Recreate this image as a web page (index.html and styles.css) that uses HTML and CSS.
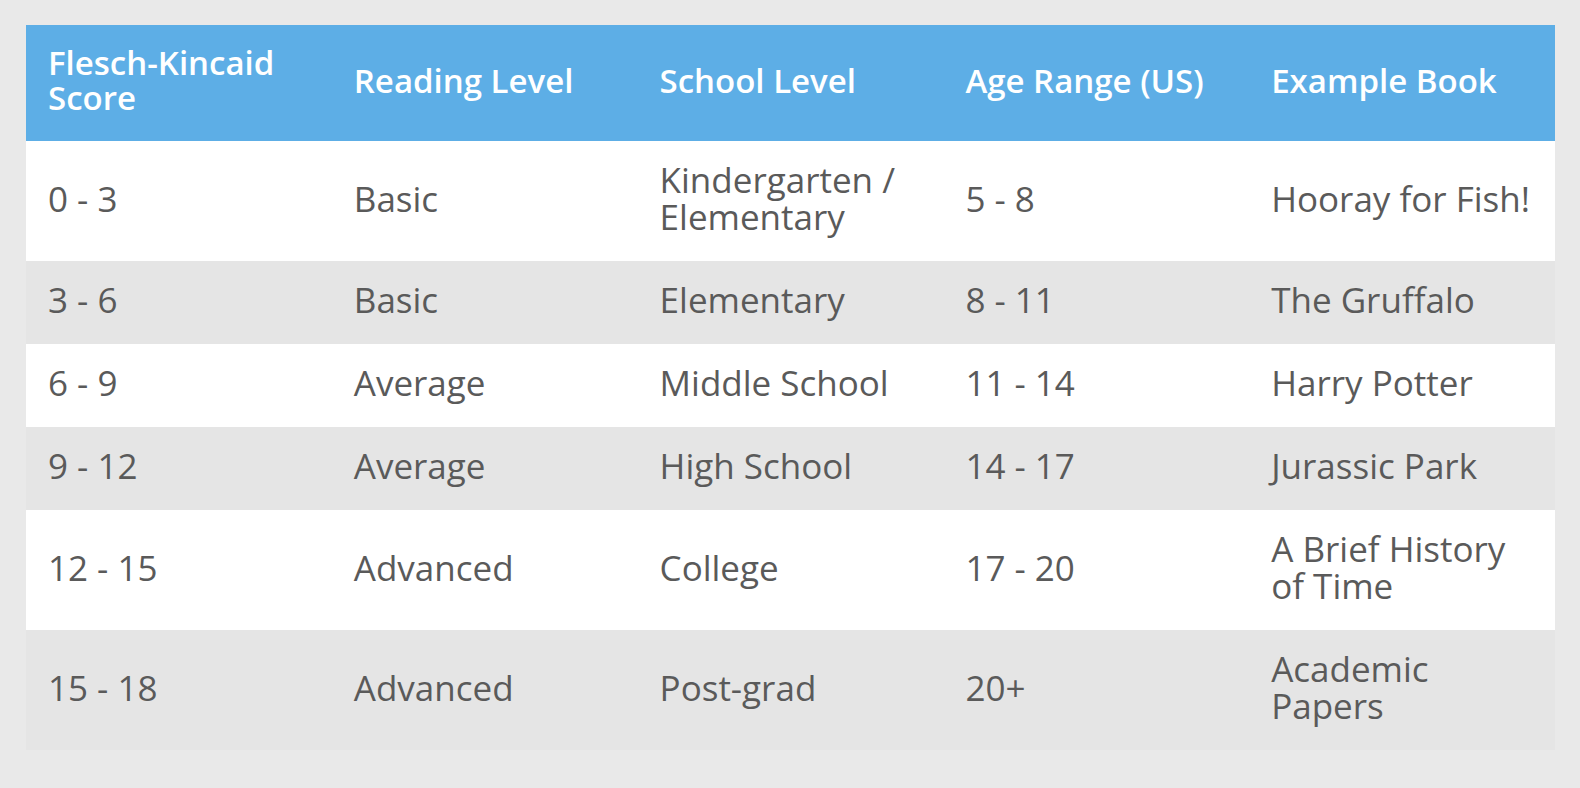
FILE: index.html
```html
<!DOCTYPE html>
<html lang="en">
<head>
<meta charset="utf-8">
<title>Flesch-Kincaid Reading Levels</title>
<link rel="stylesheet" href="styles.css">
</head>
<body>
<table class="levels">
  <thead>
    <tr>
      <th>Flesch-Kincaid Score</th>
      <th>Reading Level</th>
      <th>School Level</th>
      <th>Age Range (US)</th>
      <th>Example Book</th>
    </tr>
  </thead>
  <tbody>
    <tr><td>0 - 3</td><td>Basic</td><td>Kindergarten / Elementary</td><td>5 - 8</td><td>Hooray for Fish!</td></tr>
    <tr><td>3 - 6</td><td>Basic</td><td>Elementary</td><td>8 - 11</td><td>The Gruffalo</td></tr>
    <tr><td>6 - 9</td><td>Average</td><td>Middle School</td><td>11 - 14</td><td>Harry Potter</td></tr>
    <tr><td>9 - 12</td><td>Average</td><td>High School</td><td>14 - 17</td><td>Jurassic Park</td></tr>
    <tr><td>12 - 15</td><td>Advanced</td><td>College</td><td>17 - 20</td><td>A Brief History of Time</td></tr>
    <tr><td>15 - 18</td><td>Advanced</td><td>Post-grad</td><td>20+</td><td>Academic Papers</td></tr>
  </tbody>
</table>
</body>
</html>
```
FILE: styles.css
```css
html, body {
  margin: 0;
  padding: 0;
  background: #e9e9e9;
}
body {
  padding: 25px 0 0 26px;
  font-family: "Open Sans", "Noto Sans", sans-serif;
  color: #5a5a5a;
}
.levels {
  width: 1529px;
  table-layout: fixed;
  border-collapse: collapse;
  border-spacing: 0;
}
.levels th,
.levels td {
  text-align: left;
  vertical-align: middle;
  padding: 20px 22px 26px 22px;
}
.levels th {
  background: #5daee6;
  color: #ffffff;
  font-size: 33px;
  line-height: 35px;
  font-weight: 600;
}
.levels td {
  font-size: 35px;
  line-height: 37px;
  font-weight: 400;
}
.levels tbody tr:nth-child(odd) {
  background: #ffffff;
}
.levels tbody tr:nth-child(even) {
  background: #e5e5e5;
}
```
